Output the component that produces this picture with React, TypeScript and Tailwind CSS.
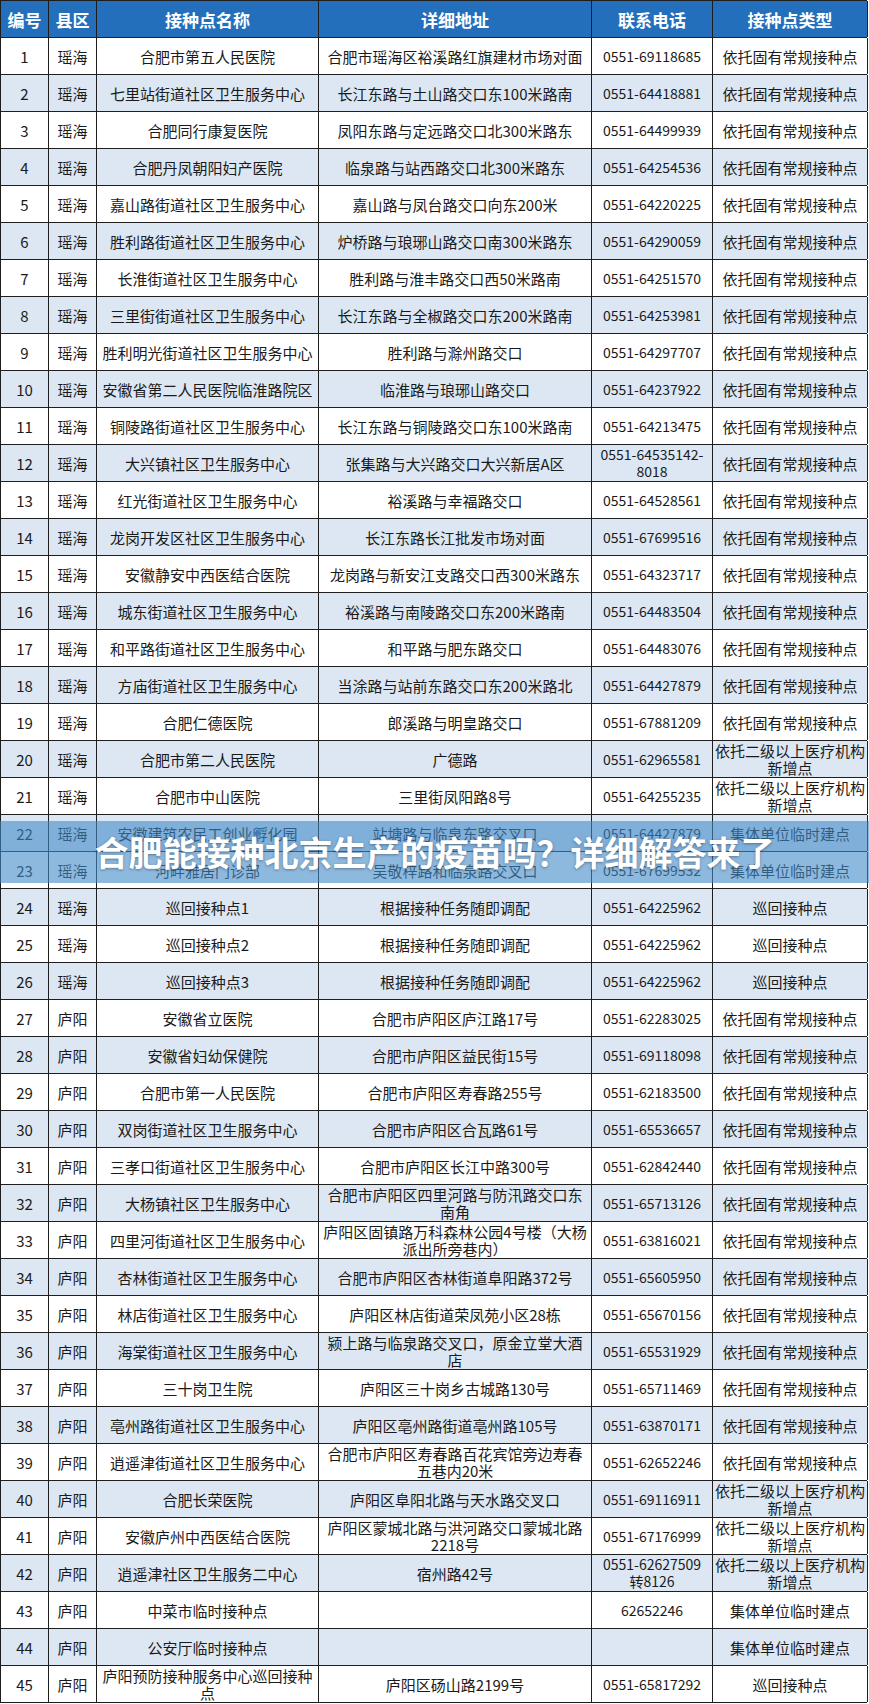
const REG = "依托固有常规接种点";
const NEW = "依托二级以上医疗机构\n新增点";
const TMP = "集体单位临时建点";
const TOUR = "巡回接种点";

// [名称, 地址, 电话, 类型]
const rows: [string, string, string, string][] = [
  ["合肥市第五人民医院", "合肥市瑶海区裕溪路红旗建材市场对面", "0551-69118685", REG],
  ["七里站街道社区卫生服务中心", "长江东路与土山路交口东100米路南", "0551-64418881", REG],
  ["合肥同行康复医院", "凤阳东路与定远路交口北300米路东", "0551-64499939", REG],
  ["合肥丹凤朝阳妇产医院", "临泉路与站西路交口北300米路东", "0551-64254536", REG],
  ["嘉山路街道社区卫生服务中心", "嘉山路与凤台路交口向东200米", "0551-64220225", REG],
  ["胜利路街道社区卫生服务中心", "炉桥路与琅琊山路交口南300米路东", "0551-64290059", REG],
  ["长淮街道社区卫生服务中心", "胜利路与淮丰路交口西50米路南", "0551-64251570", REG],
  ["三里街街道社区卫生服务中心", "长江东路与全椒路交口东200米路南", "0551-64253981", REG],
  ["胜利明光街道社区卫生服务中心", "胜利路与滁州路交口", "0551-64297707", REG],
  ["安徽省第二人民医院临淮路院区", "临淮路与琅琊山路交口", "0551-64237922", REG],
  ["铜陵路街道社区卫生服务中心", "长江东路与铜陵路交口东100米路南", "0551-64213475", REG],
  ["大兴镇社区卫生服务中心", "张集路与大兴路交口大兴新居A区", "0551-64535142-\n8018", REG],
  ["红光街道社区卫生服务中心", "裕溪路与幸福路交口", "0551-64528561", REG],
  ["龙岗开发区社区卫生服务中心", "长江东路长江批发市场对面", "0551-67699516", REG],
  ["安徽静安中西医结合医院", "龙岗路与新安江支路交口西300米路东", "0551-64323717", REG],
  ["城东街道社区卫生服务中心", "裕溪路与南陵路交口东200米路南", "0551-64483504", REG],
  ["和平路街道社区卫生服务中心", "和平路与肥东路交口", "0551-64483076", REG],
  ["方庙街道社区卫生服务中心", "当涂路与站前东路交口东200米路北", "0551-64427879", REG],
  ["合肥仁德医院", "郎溪路与明皇路交口", "0551-67881209", REG],
  ["合肥市第二人民医院", "广德路", "0551-62965581", NEW],
  ["合肥市中山医院", "三里街凤阳路8号", "0551-64255235", NEW],
  ["安徽建筑农民工创业孵化园", "站塘路与临泉东路交叉口", "0551-64427879", TMP],
  ["河畔雅居门诊部", "吴敬梓路和临泉路交叉口", "0551-67699532", TMP],
  ["巡回接种点1", "根据接种任务随即调配", "0551-64225962", TOUR],
  ["巡回接种点2", "根据接种任务随即调配", "0551-64225962", TOUR],
  ["巡回接种点3", "根据接种任务随即调配", "0551-64225962", TOUR],
  ["安徽省立医院", "合肥市庐阳区庐江路17号", "0551-62283025", REG],
  ["安徽省妇幼保健院", "合肥市庐阳区益民街15号", "0551-69118098", REG],
  ["合肥市第一人民医院", "合肥市庐阳区寿春路255号", "0551-62183500", REG],
  ["双岗街道社区卫生服务中心", "合肥市庐阳区合瓦路61号", "0551-65536657", REG],
  ["三孝口街道社区卫生服务中心", "合肥市庐阳区长江中路300号", "0551-62842440", REG],
  ["大杨镇社区卫生服务中心", "合肥市庐阳区四里河路与防汛路交口东\n南角", "0551-65713126", REG],
  ["四里河街道社区卫生服务中心", "庐阳区固镇路万科森林公园4号楼（大杨\n派出所旁巷内）", "0551-63816021", REG],
  ["杏林街道社区卫生服务中心", "合肥市庐阳区杏林街道阜阳路372号", "0551-65605950", REG],
  ["林店街道社区卫生服务中心", "庐阳区林店街道荣凤苑小区28栋", "0551-65670156", REG],
  ["海棠街道社区卫生服务中心", "颍上路与临泉路交叉口，原金立堂大酒\n店", "0551-65531929", REG],
  ["三十岗卫生院", "庐阳区三十岗乡古城路130号", "0551-65711469", REG],
  ["亳州路街道社区卫生服务中心", "庐阳区亳州路街道亳州路105号", "0551-63870171", REG],
  ["逍遥津街道社区卫生服务中心", "合肥市庐阳区寿春路百花宾馆旁边寿春\n五巷内20米", "0551-62652246", REG],
  ["合肥长荣医院", "庐阳区阜阳北路与天水路交叉口", "0551-69116911", NEW],
  ["安徽庐州中西医结合医院", "庐阳区蒙城北路与洪河路交口蒙城北路\n2218号", "0551-67176999", NEW],
  ["逍遥津社区卫生服务二中心", "宿州路42号", "0551-62627509\n转8126", NEW],
  ["中菜市临时接种点", "", "62652246", TMP],
  ["公安厅临时接种点", "", "", TMP],
  ["庐阳预防接种服务中心巡回接种\n点", "庐阳区砀山路2199号", "0551-65817292", TOUR],
];

const cols = "grid grid-cols-[48px_48px_222px_273px_121px_155px]";

function Cell({ children, className = "" }: { children?: React.ReactNode; className?: string }) {
  return (
    <div
      className={`border-r border-[#1e1e1e] flex items-center justify-center text-center whitespace-pre-line leading-[17px] ${className}`}
    >
      {children}
    </div>
  );
}

export default function App() {
  return (
    <div className="relative w-[869px] min-h-[1704px] bg-white font-['Noto_Sans_CJK_SC','Noto_Sans',sans-serif] text-[15px] text-[#1a1a1a]">
      <div className="w-[867px] border-l border-t border-[#1e1e1e]">
        {/* header */}
        <div className={`${cols} h-[37px] border-b border-[#1e1e1e] bg-[#236fbc] text-white font-bold text-[17px]`}>
          <Cell>编号</Cell>
          <Cell>县区</Cell>
          <Cell>接种点名称</Cell>
          <Cell>详细地址</Cell>
          <Cell>联系电话</Cell>
          <Cell>接种点类型</Cell>
        </div>

        {rows.map((r, i) => {
          const n = i + 1;
          return (
            <div
              key={n}
              className={`${cols} h-[37px] border-b border-[#1e1e1e] ${n % 2 === 0 ? "bg-[#dce7f3]" : "bg-white"}`}
            >
              <Cell>{n}</Cell>
              <Cell>{n <= 26 ? "瑶海" : "庐阳"}</Cell>
              <Cell>{r[0]}</Cell>
              <Cell>{r[1]}</Cell>
              <Cell className="text-[14px]">{r[2]}</Cell>
              <Cell>{r[3]}</Cell>
            </div>
          );
        })}
      </div>

      {/* title banner over the table */}
      <div className="absolute left-0 top-[821px] w-full h-[62px] bg-[rgba(66,138,200,0.6)] flex items-center justify-center">
        <span className="text-white font-bold text-[34px] leading-none [text-shadow:0_1px_3px_rgba(0,0,0,0.35)]">
          合肥能接种北京生产的疫苗吗？详细解答来了
        </span>
      </div>
    </div>
  );
}
